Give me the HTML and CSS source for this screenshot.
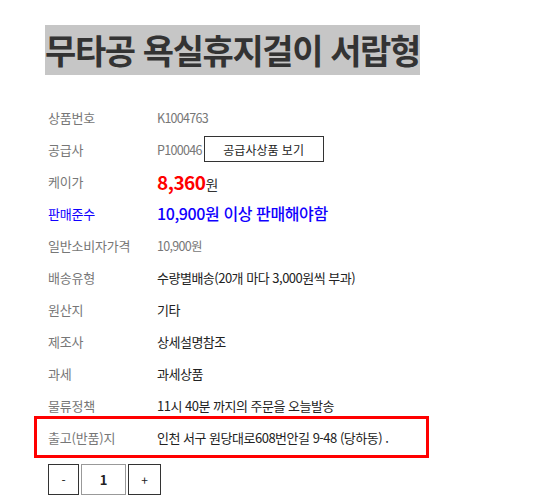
FILE: index.html
```html
<!DOCTYPE html>
<html lang="ko">
<head>
<meta charset="utf-8">
<link rel="stylesheet" href="styles.css">
</head>
<body>
<div class="page">
  <h1 class="title">무타공 욕실휴지걸이 서랍형</h1>
  <div class="info">
    <div class="row"><span class="label">상품번호</span><span class="val light">K1004763</span></div>
    <div class="row"><span class="label">공급사</span><span class="val light">P100046</span><button class="sup-btn">공급사상품 보기</button></div>
    <div class="row"><span class="label">케이가</span><span class="val"><span class="price">8,360</span><span class="won">원</span></span></div>
    <div class="row blue"><span class="label">판매준수</span><span class="val big">10,900원 이상 판매해야함</span></div>
    <div class="row"><span class="label">일반소비자가격</span><span class="val light">10,900원</span></div>
    <div class="row"><span class="label">배송유형</span><span class="val">수량별배송(20개 마다 3,000원씩 부과)</span></div>
    <div class="row"><span class="label">원산지</span><span class="val">기타</span></div>
    <div class="row"><span class="label">제조사</span><span class="val">상세설명참조</span></div>
    <div class="row"><span class="label">과세</span><span class="val">과세상품</span></div>
    <div class="row"><span class="label">물류정책</span><span class="val">11시 40분 까지의 주문을 오늘발송</span></div>
    <div class="row highlight"><span class="label">출고(반품)지</span><span class="val">인천 서구 원당대로608번안길 9-48 (당하동) .</span></div>
  </div>
  <div class="qty">
    <button class="qbtn">-</button>
    <span class="qinput">1</span>
    <button class="qbtn plus">+</button>
  </div>
</div>
</body>
</html>
```
FILE: styles.css
```css
html, body { margin: 0; padding: 0; background: #fff; }
body { font-family: "Noto Sans CJK KR", "Noto Sans", sans-serif; }
.page { padding: 25px 0 0 45px; }
.title {
  display: inline-block;
  margin: 0;
  height: 50px;
  line-height: 50px;
  background: #c6c6c6;
  color: #333;
  font-size: 34px;
  font-weight: 700;
  letter-spacing: -1.4px;
  white-space: nowrap;
}
.info { margin: 26px 0 0 -6px; width: 385px; }
.row {
  display: flex;
  align-items: center;
  height: 32px;
  padding-left: 9px;
  font-size: 13px;
  color: #222;
}
.label { width: 109px; flex: none; color: #777; letter-spacing: -0.2px; }
.val { flex: none; white-space: nowrap; letter-spacing: -0.5px; }
.val.light { color: #777; font-size: 12.5px; letter-spacing: -0.7px; }
.price { color: #ff0000; font-size: 19px; font-weight: 700; letter-spacing: -0.5px; }
.won { color: #333; font-size: 14px; }
.blue .label, .blue .val { color: #1000ff; }
.val.big { font-size: 16px; font-weight: 500; letter-spacing: -0.4px; }
.sup-btn {
  margin-left: 2px;
  width: 120px;
  height: 26px;
  border: 1px solid #333;
  background: #fff;
  font-family: inherit;
  font-size: 12px;
  color: #222;
  padding: 0;
}
.highlight { outline: 3px solid #f00; outline-offset: 2px; }
.qty { display: flex; align-items: center; gap: 2px; margin-top: 11px; margin-left: 3px; }
.qbtn {
  width: 31px;
  height: 31px;
  border: 1px solid #333;
  background: #fff;
  font-family: inherit;
  font-size: 12px;
  padding: 0;
  color: #222;
}
.qbtn.plus { width: 33px; }
.qinput {
  box-sizing: border-box;
  width: 45px;
  height: 31px;
  border: 1px solid #999;
  display: flex;
  align-items: center;
  justify-content: center;
  font-size: 13px;
  font-weight: 700;
  color: #222;
}
```
